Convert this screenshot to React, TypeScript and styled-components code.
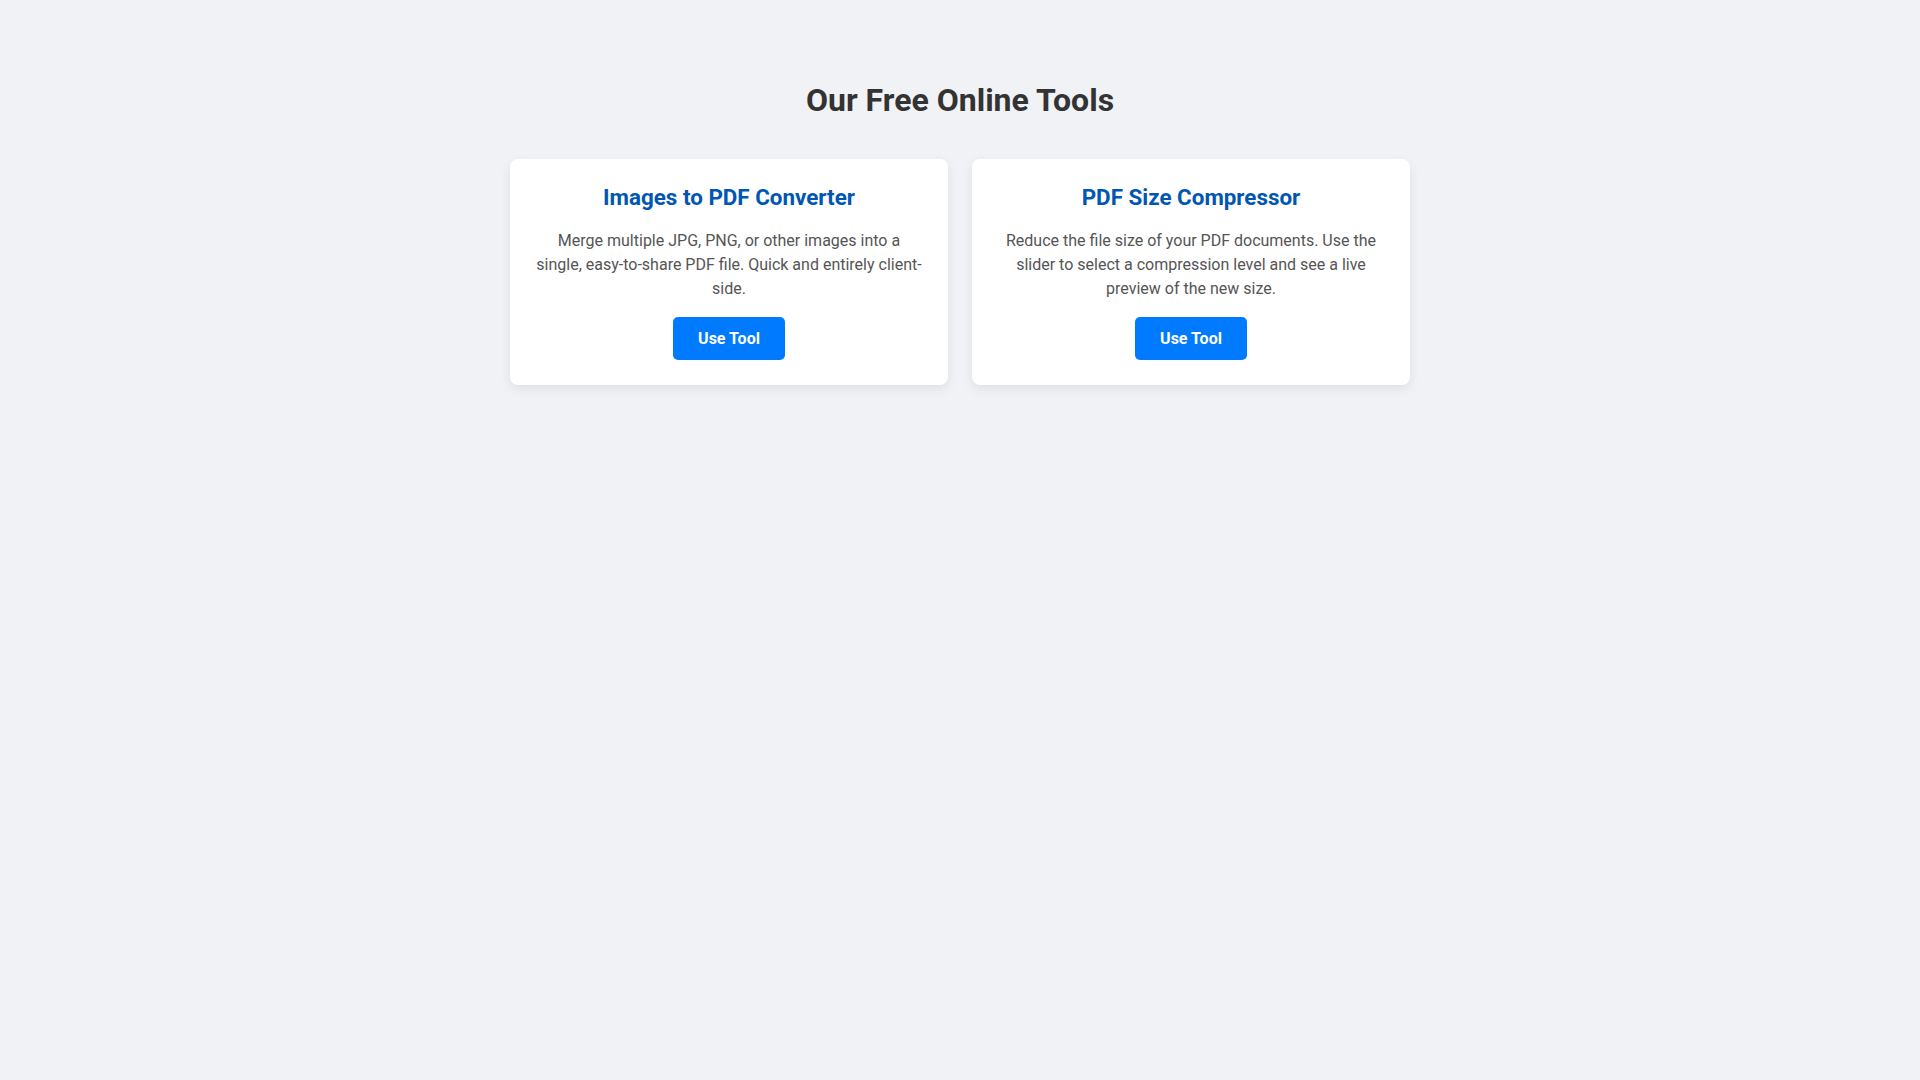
import React from 'react';
import styled, { createGlobalStyle } from 'styled-components';

const GlobalStyle = createGlobalStyle`
  body {
    margin: 0;
    background: #f0f2f5;
    font-family: Roboto, "Liberation Sans", Arial, sans-serif;
    color: #333;
  }
`;

const Page = styled.main`
  max-width: 900px;
  margin: 0 auto;
  padding: 81px 0 40px;
`;

const Heading = styled.h1`
  margin: 0 0 40px;
  text-align: center;
  font-size: 32px;
  font-weight: 700;
  color: #333;
`;

const ToolGrid = styled.div`
  display: grid;
  grid-template-columns: repeat(2, 1fr);
  gap: 24px;
`;

const Card = styled.section`
  background: #fff;
  border-radius: 8px;
  box-shadow: 0 4px 12px rgba(0, 0, 0, 0.08);
  padding: 25px 24px;
  text-align: center;
`;

const CardTitle = styled.h3`
  margin: 0 0 19px;
  font-size: 22.4px;
  font-weight: 700;
  color: #0056b3;
`;

const CardText = styled.p`
  margin: 0 0 16px;
  font-size: 16px;
  line-height: 1.5;
  color: #555;
`;

const UseButton = styled.button`
  display: inline-block;
  border: none;
  border-radius: 5px;
  padding: 12px 25px;
  background: #007bff;
  color: #fff;
  font-family: inherit;
  font-size: 16px;
  font-weight: 700;
  cursor: pointer;
`;

const tools = [
  {
    title: 'Images to PDF Converter',
    text: 'Merge multiple JPG, PNG, or other images into a single, easy-to-share PDF file. Quick and entirely client-side.',
  },
  {
    title: 'PDF Size Compressor',
    text: 'Reduce the file size of your PDF documents. Use the slider to select a compression level and see a live preview of the new size.',
  },
];

export default function App() {
  return (
    <>
      <GlobalStyle />
      <Page>
        <Heading>Our Free Online Tools</Heading>
        <ToolGrid>
          {tools.map((tool) => (
            <Card key={tool.title}>
              <CardTitle>{tool.title}</CardTitle>
              <CardText>{tool.text}</CardText>
              <UseButton>Use Tool</UseButton>
            </Card>
          ))}
        </ToolGrid>
      </Page>
    </>
  );
}
